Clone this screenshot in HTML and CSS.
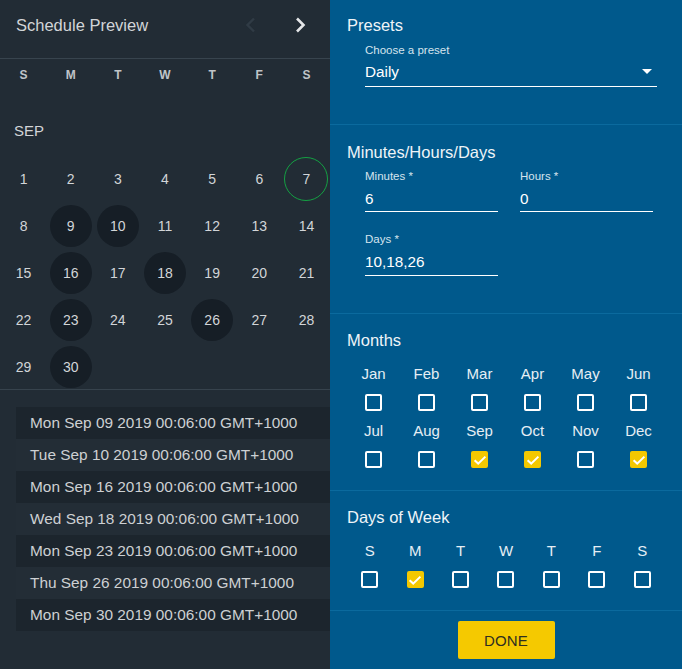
FILE: index.html
```html
<!DOCTYPE html>
<html lang="en">
<head>
<meta charset="utf-8">
<title>Schedule Preview</title>
<link rel="stylesheet" href="styles.css">
</head>
<body>
<div class="app">
  <aside class="preview">
    <header class="preview-head">
      <h1 class="preview-title">Schedule Preview</h1>
      <div class="nav">
        <button class="nav-btn nav-btn--dim" aria-label="Previous month">
          <svg viewBox="0 0 24 24" width="24" height="24"><path d="M15 5.5l-6.5 6.5 6.5 6.5" fill="none" stroke="currentColor" stroke-width="2.4"/></svg>
        </button>
        <button class="nav-btn" aria-label="Next month">
          <svg viewBox="0 0 24 24" width="24" height="24"><path d="M9 5.5l6.5 6.5-6.5 6.5" fill="none" stroke="currentColor" stroke-width="2.6"/></svg>
        </button>
      </div>
    </header>
    <div class="weekdays">
      <span>S</span><span>M</span><span>T</span><span>W</span><span>T</span><span>F</span><span>S</span>
    </div>
    <div class="month-label">SEP</div>
    <div class="days">
      <span class="day">1</span><span class="day">2</span><span class="day">3</span><span class="day">4</span><span class="day">5</span><span class="day">6</span><span class="day day--today">7</span>
      <span class="day">8</span><span class="day day--hit">9</span><span class="day day--hit">10</span><span class="day">11</span><span class="day">12</span><span class="day">13</span><span class="day">14</span>
      <span class="day">15</span><span class="day day--hit">16</span><span class="day">17</span><span class="day day--hit">18</span><span class="day">19</span><span class="day">20</span><span class="day">21</span>
      <span class="day">22</span><span class="day day--hit">23</span><span class="day">24</span><span class="day">25</span><span class="day day--hit">26</span><span class="day">27</span><span class="day">28</span>
      <span class="day">29</span><span class="day day--hit">30</span>
    </div>
    <ul class="occurrences">
      <li>Mon Sep 09 2019 00:06:00 GMT+1000</li>
      <li>Tue Sep 10 2019 00:06:00 GMT+1000</li>
      <li>Mon Sep 16 2019 00:06:00 GMT+1000</li>
      <li>Wed Sep 18 2019 00:06:00 GMT+1000</li>
      <li>Mon Sep 23 2019 00:06:00 GMT+1000</li>
      <li>Thu Sep 26 2019 00:06:00 GMT+1000</li>
      <li>Mon Sep 30 2019 00:06:00 GMT+1000</li>
    </ul>
  </aside>

  <main class="settings">
    <section class="panel">
      <h2 class="panel-title">Presets</h2>
      <div class="field field--wide">
        <label class="field-label">Choose a preset</label>
        <div class="field-value field-value--select">
          <span>Daily</span>
          <span class="caret"></span>
        </div>
      </div>
    </section>

    <section class="panel panel--fields">
      <h2 class="panel-title">Minutes/Hours/Days</h2>
      <div class="field-row">
        <div class="field">
          <label class="field-label">Minutes *</label>
          <div class="field-value">6</div>
        </div>
        <div class="field">
          <label class="field-label">Hours *</label>
          <div class="field-value">0</div>
        </div>
      </div>
      <div class="field-row field-row--next">
        <div class="field">
          <label class="field-label">Days *</label>
          <div class="field-value">10,18,26</div>
        </div>
      </div>
    </section>

    <section class="panel panel--checks">
      <h2 class="panel-title">Months</h2>
      <div class="check-grid check-grid--months">
        <div class="check"><span class="check-label">Jan</span><span class="box"></span></div>
        <div class="check"><span class="check-label">Feb</span><span class="box"></span></div>
        <div class="check"><span class="check-label">Mar</span><span class="box"></span></div>
        <div class="check"><span class="check-label">Apr</span><span class="box"></span></div>
        <div class="check"><span class="check-label">May</span><span class="box"></span></div>
        <div class="check"><span class="check-label">Jun</span><span class="box"></span></div>
        <div class="check"><span class="check-label">Jul</span><span class="box"></span></div>
        <div class="check"><span class="check-label">Aug</span><span class="box"></span></div>
        <div class="check"><span class="check-label">Sep</span><span class="box box--on"><svg viewBox="0 0 18 18" width="18" height="18"><path d="M3.6 9.2l3.6 3.4 7.2-7" fill="none" stroke="#fff" stroke-width="2"/></svg></span></div>
        <div class="check"><span class="check-label">Oct</span><span class="box box--on"><svg viewBox="0 0 18 18" width="18" height="18"><path d="M3.6 9.2l3.6 3.4 7.2-7" fill="none" stroke="#fff" stroke-width="2"/></svg></span></div>
        <div class="check"><span class="check-label">Nov</span><span class="box"></span></div>
        <div class="check"><span class="check-label">Dec</span><span class="box box--on"><svg viewBox="0 0 18 18" width="18" height="18"><path d="M3.6 9.2l3.6 3.4 7.2-7" fill="none" stroke="#fff" stroke-width="2"/></svg></span></div>
      </div>
    </section>

    <section class="panel panel--checks panel--week">
      <h2 class="panel-title">Days of Week</h2>
      <div class="check-grid check-grid--week">
        <div class="check"><span class="check-label">S</span><span class="box"></span></div>
        <div class="check"><span class="check-label">M</span><span class="box box--on"><svg viewBox="0 0 18 18" width="18" height="18"><path d="M3.6 9.2l3.6 3.4 7.2-7" fill="none" stroke="#fff" stroke-width="2"/></svg></span></div>
        <div class="check"><span class="check-label">T</span><span class="box"></span></div>
        <div class="check"><span class="check-label">W</span><span class="box"></span></div>
        <div class="check"><span class="check-label">T</span><span class="box"></span></div>
        <div class="check"><span class="check-label">F</span><span class="box"></span></div>
        <div class="check"><span class="check-label">S</span><span class="box"></span></div>
      </div>
    </section>

    <footer class="actions">
      <button class="done-btn">DONE</button>
    </footer>
  </main>
</div>
</body>
</html>
```

FILE: styles.css
```css
* { box-sizing: border-box; }

html, body {
  margin: 0;
  padding: 0;
}

body {
  font-family: "Liberation Sans", Arial, sans-serif;
  width: 682px;
  height: 669px;
  overflow: hidden;
}

.app {
  display: flex;
  width: 682px;
  height: 669px;
}

/* ---------- left: preview ---------- */
.preview {
  width: 330px;
  flex: none;
  background: #222c35;
  color: #d0d3d6;
}

.preview-head {
  height: 59px;
  display: flex;
  align-items: flex-start;
  justify-content: space-between;
  padding: 15px 18px 0 16px;
  border-bottom: 1px solid #38444e;
}

.preview-title {
  margin: 0;
  font-size: 16.5px;
  font-weight: normal;
  line-height: 20px;
  color: #d2d5d8;
}

.nav {
  display: flex;
  gap: 25px;
  margin-top: -2px;
}

.nav-btn {
  width: 24px;
  height: 24px;
  padding: 0;
  border: 0;
  background: none;
  color: #e4e6e8;
  display: flex;
}

.nav-btn--dim {
  color: #303b45;
}

.weekdays {
  display: grid;
  grid-template-columns: repeat(7, 1fr);
  height: 32px;
  align-items: center;
  font-size: 12px;
  font-weight: bold;
  color: #c0c4c8;
}

.weekdays span {
  text-align: center;
}

.month-label {
  margin: 28px 0 12px 14px;
  height: 24px;
  line-height: 24px;
  font-size: 15px;
  color: #d2d5d8;
}

.days {
  display: grid;
  grid-template-columns: repeat(7, 1fr);
  grid-auto-rows: 47px;
  height: 234px;
  font-size: 14px;
  color: #d2d5d8;
}

.day {
  display: flex;
  align-items: center;
  justify-content: center;
  position: relative;
  isolation: isolate;
}

.day--hit::before,
.day--today::before {
  content: "";
  position: absolute;
  width: 42px;
  height: 42px;
  border-radius: 50%;
  left: 50%;
  top: 50%;
  transform: translate(-50%, -50%);
  z-index: -1;
}

.day--hit::before {
  background: #161e26;
}

.day--today::before {
  border: 1px solid #14a043;
}

.occurrences {
  list-style: none;
  margin: 0;
  padding: 17px 0 0 16px;
  border-top: 1px solid #37434d;
}

.occurrences li {
  height: 32px;
  line-height: 32px;
  padding-left: 14px;
  font-size: 15.4px;
  color: #cdd0d3;
  background: #232d36;
}

.occurrences li:nth-child(odd) {
  background: #1c252d;
}

/* ---------- right: settings ---------- */
.settings {
  flex: 1;
  background: #00598c;
  color: #eef4f8;
  display: flex;
  flex-direction: column;
}

.panel {
  padding: 15px 17px 37px;
  border-bottom: 1px solid #0b6a9e;
}

.panel--fields {
  padding-top: 17px;
}

.panel-title {
  margin: 0;
  font-size: 16.5px;
  font-weight: normal;
  line-height: 20px;
  color: #eef4f8;
}

.field {
  width: 133px;
}

.field--wide {
  width: 292px;
  margin-left: 18px;
  margin-top: 8px;
}

.field-row {
  display: flex;
  gap: 22px;
  margin-left: 18px;
  margin-top: 7px;
}

.field-row--next {
  margin-top: 20px;
}

.field-label {
  display: block;
  font-size: 11.5px;
  line-height: 14px;
  color: #d6e4ee;
}

.field-value {
  margin-top: 5px;
  height: 25px;
  line-height: 20px;
  padding-bottom: 4px;
  font-size: 15.3px;
  color: #ffffff;
  border-bottom: 1.5px solid #ffffff;
}

.field-row .field-value {
  margin-top: 6px;
  height: 23px;
  padding-bottom: 2px;
}

.field-row--next .field-value {
  height: 24px;
  padding-bottom: 3px;
}

.field-value--select {
  display: flex;
  justify-content: space-between;
  align-items: flex-start;
}

.caret {
  width: 0;
  height: 0;
  margin-top: 7px;
  margin-right: 5px;
  border-left: 5.5px solid transparent;
  border-right: 5.5px solid transparent;
  border-top: 5.5px solid #ffffff;
}

.panel--checks {
  padding-top: 16px;
  padding-bottom: 22px;
}

.panel--week {
  padding-bottom: 22px;
}

.check-grid {
  display: grid;
  width: 318px;
  margin-top: 15px;
  row-gap: 11px;
}

.check-grid--months {
  grid-template-columns: repeat(6, 1fr);
}

.check-grid--week {
  grid-template-columns: repeat(7, 1fr);
}

.check {
  display: flex;
  flex-direction: column;
  align-items: center;
  gap: 11px;
}

.check-label {
  font-size: 15px;
  line-height: 18px;
  color: #e6eef4;
}

.box {
  width: 17px;
  height: 17px;
  border: 2px solid #ffffff;
  border-radius: 2px;
  display: flex;
  align-items: center;
  justify-content: center;
}

.box--on {
  background: #f4c800;
  border-color: #f4c800;
}

.box--on svg {
  flex: none;
}

.actions {
  display: flex;
  justify-content: center;
  padding-top: 10px;
}

.done-btn {
  width: 97px;
  height: 38px;
  border: 0;
  border-radius: 2px;
  background: #f5c900;
  color: #2e2e20;
  font-family: "Liberation Sans", Arial, sans-serif;
  font-size: 15px;
  letter-spacing: 0.2px;
}
```
